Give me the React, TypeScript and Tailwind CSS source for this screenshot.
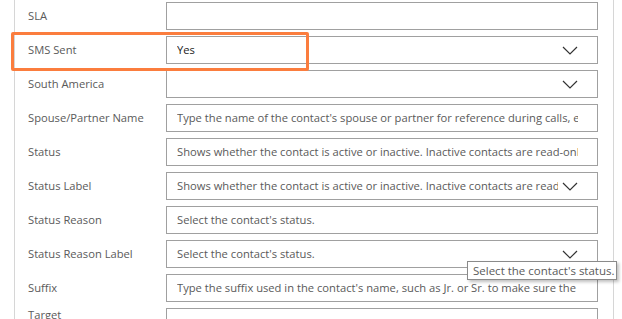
import React from "react";

type Row = { label: string; value?: string; dark?: boolean; chevron?: boolean };

const rows: Row[] = [
  { label: "SLA" },
  { label: "SMS Sent", value: "Yes", dark: true, chevron: true },
  { label: "South America", chevron: true },
  { label: "Spouse/Partner Name", value: "Type the name of the contact's spouse or partner for reference during calls, events, or other communications with the contact." },
  { label: "Status", value: "Shows whether the contact is active or inactive. Inactive contacts are read-only and can't be edited unless they are reactivated." },
  { label: "Status Label", value: "Shows whether the contact is active or inactive. Inactive contacts are read-only and can't be edited unless they are reactivated.", chevron: true },
  { label: "Status Reason", value: "Select the contact's status." },
  { label: "Status Reason Label", value: "Select the contact's status.", chevron: true },
  { label: "Suffix", value: "Type the suffix used in the contact's name, such as Jr. or Sr. to make sure the contact is addressed correctly in sales calls, email, and marketing campaigns." },
  { label: "Target" },
];

function Chevron() {
  return (
    <svg width="16" height="9" viewBox="0 0 16 9" className="shrink-0">
      <path d="M1 1 L8 8 L15 1" fill="none" stroke="#333333" strokeWidth="1.2" />
    </svg>
  );
}

export default function App() {
  return (
    <div
      className="relative w-[622px] h-[319px] overflow-hidden bg-white"
      style={{ fontFamily: '"Open Sans", "Noto Sans", sans-serif' }}
    >
      <div className="absolute left-[14px] top-0 bottom-0 w-px bg-[#d6d6d6]" />
      <div className="absolute left-[613px] top-0 bottom-0 w-px bg-[#d6d6d6]" />
      <div className="flex flex-col gap-[6px] pt-[2px] pl-[28px]">
        {rows.map((r, i) => (
          <div key={r.label} className={"flex h-[28px] " + (i === rows.length - 1 ? "items-start" : "items-center")}>
            <div className="w-[138px] shrink-0 text-[11.2px] leading-[14px] text-[#5a5a5a] whitespace-nowrap">{r.label}</div>
            <div className="w-[432px] h-[28px] border border-[#a0a0a0] flex items-center pl-[10px] pr-[19px]">
              <div
                className={
                  "flex-1 overflow-hidden whitespace-nowrap text-[11.2px] " +
                  (r.dark ? "text-[#222222]" : "text-[#5a5a5a]")
                }
              >
                {r.value ?? ""}
              </div>
              {r.chevron && <div className="ml-[4px]"><Chevron /></div>}
            </div>
          </div>
        ))}
      </div>
      <div className="absolute left-[11px] top-[32px] w-[298px] h-[39px] border-[3px] border-[#fb7d3e] rounded-[2px]" />
      <div className="absolute left-[467px] top-[261px] w-[150px] h-[19px] bg-white border border-[#8a8a8a] shadow-[2px_2px_3px_rgba(0,0,0,0.25)] flex items-center pl-[5px] text-[11.5px] text-[#5a5a5a] whitespace-nowrap">
        Select the contact's status.
      </div>
    </div>
  );
}
